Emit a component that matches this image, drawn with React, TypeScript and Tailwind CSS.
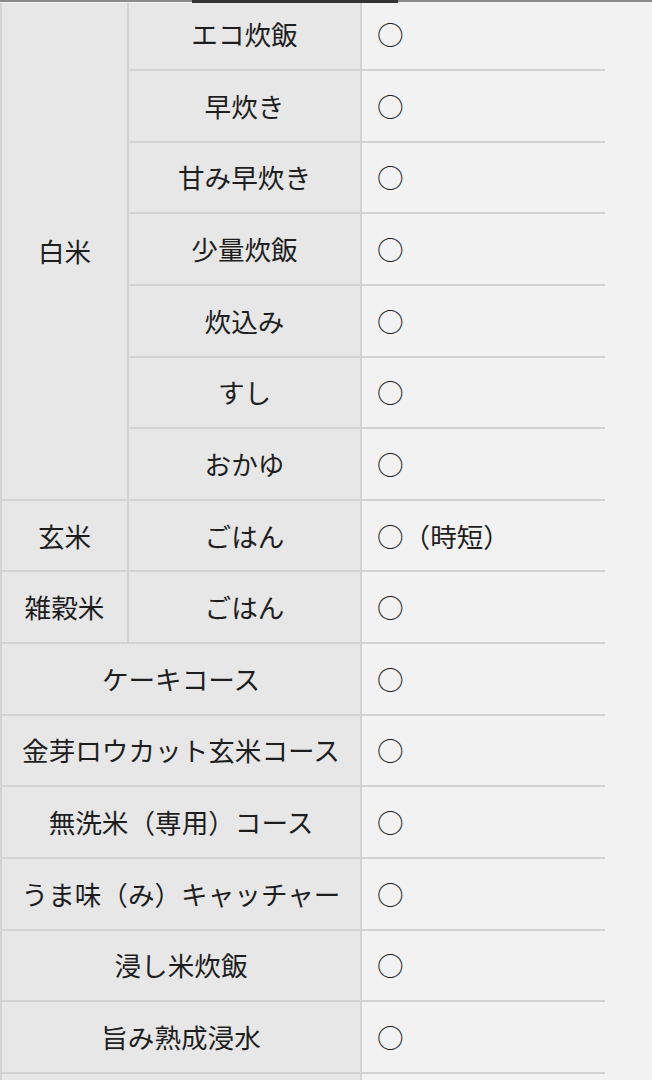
import React from "react";

type Row = { group?: string; span?: number; mode: string; mark: string; wide?: boolean };

const rows: Row[] = [
  { group: "白米", span: 7, mode: "エコ炊飯", mark: "○" },
  { mode: "早炊き", mark: "○" },
  { mode: "甘み早炊き", mark: "○" },
  { mode: "少量炊飯", mark: "○" },
  { mode: "炊込み", mark: "○" },
  { mode: "すし", mark: "○" },
  { mode: "おかゆ", mark: "○" },
  { group: "玄米", span: 1, mode: "ごはん", mark: "○（時短）" },
  { group: "雑穀米", span: 1, mode: "ごはん", mark: "○" },
  { mode: "ケーキコース", mark: "○", wide: true },
  { mode: "金芽ロウカット玄米コース", mark: "○", wide: true },
  { mode: "無洗米（専用）コース", mark: "○", wide: true },
  { mode: "うま味（み）キャッチャー", mark: "○", wide: true },
  { mode: "浸し米炊飯", mark: "○", wide: true },
  { mode: "旨み熟成浸水", mark: "○", wide: true },
  // next row, only its top edge shows
  { mode: "", mark: "", wide: true },
];

const head =
  "flex items-center justify-center bg-[#e7e7e7] border-b-2 border-r-2 border-[#d3d3d3] whitespace-nowrap";

export default function App() {
  return (
    <div
      className="w-[652px] h-[1080px] overflow-hidden bg-[#f2f2f2] text-[26.6px] text-[#1e1e1e]"
      style={{ fontFamily: '"Noto Sans CJK JP", "Noto Sans", sans-serif' }}
    >
      {/* tab indicator line */}
      <div className="flex h-[3px]">
        <div className="w-[192px] border-t-2 border-[#8a8a8a]" />
        <div className="w-[206px] bg-[#333]" />
        <div className="flex-1 border-t-2 border-[#8a8a8a]" />
      </div>

      <div className="grid grid-cols-[129px_233px_243px] grid-rows-[68px_repeat(15,71.64px)]">
        {rows.map((r, i) => (
          <React.Fragment key={i}>
            {r.wide ? (
              <div className={`${head} col-span-2 border-l-2`}>{r.mode}</div>
            ) : (
              <>
                {r.group && (
                  <div
                    className={`${head} border-l-2 ${r.span === 7 ? "row-span-7" : ""}`}
                  >
                    {r.group}
                  </div>
                )}
                <div className={`${head} ${i === 0 ? "pb-[5px]" : ""}`}>{r.mode}</div>
              </>
            )}
            <div
              className={`flex items-center pl-[15px] border-b-2 border-[#d3d3d3] bg-[#f2f2f2] whitespace-nowrap ${
                i === 0 ? "pb-[5px]" : ""
              }`}
            >
              {r.mark}
            </div>
          </React.Fragment>
        ))}
      </div>
    </div>
  );
}
